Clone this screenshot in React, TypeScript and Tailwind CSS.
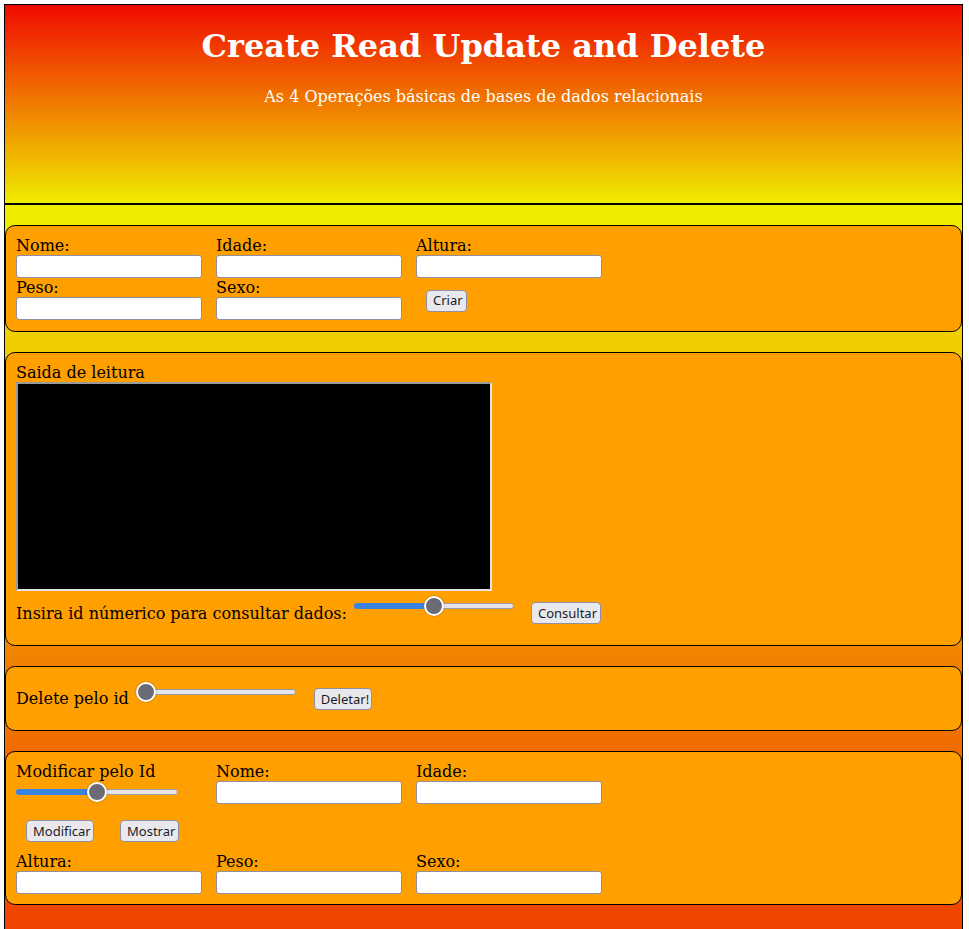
import React from 'react';

const serif = "font-['DejaVu_Serif','Liberation_Serif',serif]";

interface SliderProps {
  width: number;
  value: number;
  className?: string;
}

// Firefox-like range input
const Slider: React.FC<SliderProps> = ({ width, value, className = '' }) => {
  const offset = (width - 20) * value;
  return (
    <div className={`relative h-[20px] shrink-0 ${className}`} style={{ width }}>
      <div className="absolute left-0 right-0 top-[7px] h-[6px] rounded-full bg-[#e5e5ea] border border-[#9b9ba6]" />
      <div
        className="absolute left-0 top-[7px] h-[6px] rounded-full bg-[#3a83e0]"
        style={{ width: offset + 10 }}
      />
      <div
        className="absolute top-0 w-[20px] h-[20px] rounded-full bg-[#6b6b76] border-2 border-white shadow-[0_0_2px_rgba(0,0,0,0.35)]"
        style={{ left: offset }}
      />
    </div>
  );
};

const Button: React.FC<{ label: string; className?: string }> = ({ label, className = '' }) => (
  <button
    className={`h-[22px] px-[6px] shrink-0 bg-[#e9e9ed] border border-[#8f8f9d] rounded-[4px] text-[13px] leading-none text-[#1b1b1f] font-['Noto_Sans','Roboto',sans-serif] ${className}`}
  >
    {label}
  </button>
);

const Field: React.FC<{ label: string }> = ({ label }) => (
  <div className="w-[200px] shrink-0">
    <div className="leading-[19px]">{label}</div>
    <input
      type="text"
      className="block w-[186px] h-[23px] bg-white border border-[#8f8f9d] rounded-[3px]"
    />
  </div>
);

const Card: React.FC<{ children: React.ReactNode; className?: string }> = ({ children, className = '' }) => (
  <div className={`rounded-[10px] border border-black bg-[#ff9f00] p-[10px] ${className}`}>{children}</div>
);

export default function App() {
  return (
    <div className={`ml-[4px] mt-[4px] w-[959px] border border-black text-[16px] text-black ${serif}`}>
      {/* Header */}
      <header className="h-[200px] border-b-2 border-black bg-[linear-gradient(to_bottom,#f00a00,#f0ec00)] text-center text-white">
        <h1 className="pt-[23px] text-[32px] leading-[37px] font-bold">Create Read Update and Delete</h1>
        <p className="mt-[22px] leading-[19px]">As 4 Operações básicas de bases de dados relacionais</p>
      </header>

      <main className="flex flex-col gap-[20px] pt-[20px] h-[1000px] bg-[linear-gradient(to_bottom,#f0ee00,#f00000)]">
        {/* Create */}
        <Card className="pb-[11px]">
          <div className="flex">
            <Field label="Nome:" />
            <Field label="Idade:" />
            <Field label="Altura:" />
          </div>
          <div className="flex">
            <Field label="Peso:" />
            <Field label="Sexo:" />
            <div className="w-[200px] pl-[10px] pt-[10px]">
              <Button label="Criar" className="w-[41px]" />
            </div>
          </div>
        </Card>

        {/* Read */}
        <Card>
          <div className="leading-[19px]">Saida de leitura</div>
          <div className="w-[476px] h-[209px] bg-black border-2 border-t-[#9a9a9a] border-l-[#9a9a9a] border-b-[#e4e4e4] border-r-[#e4e4e4]" />
          <div className="flex items-start h-[44px]">
            <span className="mt-[13px] leading-[19px]">Insira id númerico para consultar dados:</span>
            <Slider width={160} value={0.5} className="ml-[7px] mt-[5px]" />
            <Button label="Consultar" className="ml-[17px] mt-[11px] w-[70px]" />
          </div>
        </Card>

        {/* Delete */}
        <Card>
          <div className="flex items-start h-[43px]">
            <span className="mt-[12px] leading-[19px]">Delete pelo id</span>
            <Slider width={160} value={0} className="ml-[7px] mt-[5px]" />
            <Button label="Deletar!" className="ml-[18px] mt-[11px] w-[58px]" />
          </div>
        </Card>

        {/* Update */}
        <Card>
          <div className="flex">
            <div className="w-[200px] shrink-0">
              <div className="leading-[19px]">Modificar pelo Id</div>
              <Slider width={162} value={0.5} className="mt-[1px]" />
            </div>
            <Field label="Nome:" />
            <Field label="Idade:" />
          </div>
          <div className="flex mt-[16px] pl-[10px]">
            <Button label="Modificar" className="w-[68px]" />
            <Button label="Mostrar" className="ml-[26px] w-[59px]" />
          </div>
          <div className="flex mt-[10px]">
            <Field label="Altura:" />
            <Field label="Peso:" />
            <Field label="Sexo:" />
          </div>
        </Card>
      </main>
    </div>
  );
}
